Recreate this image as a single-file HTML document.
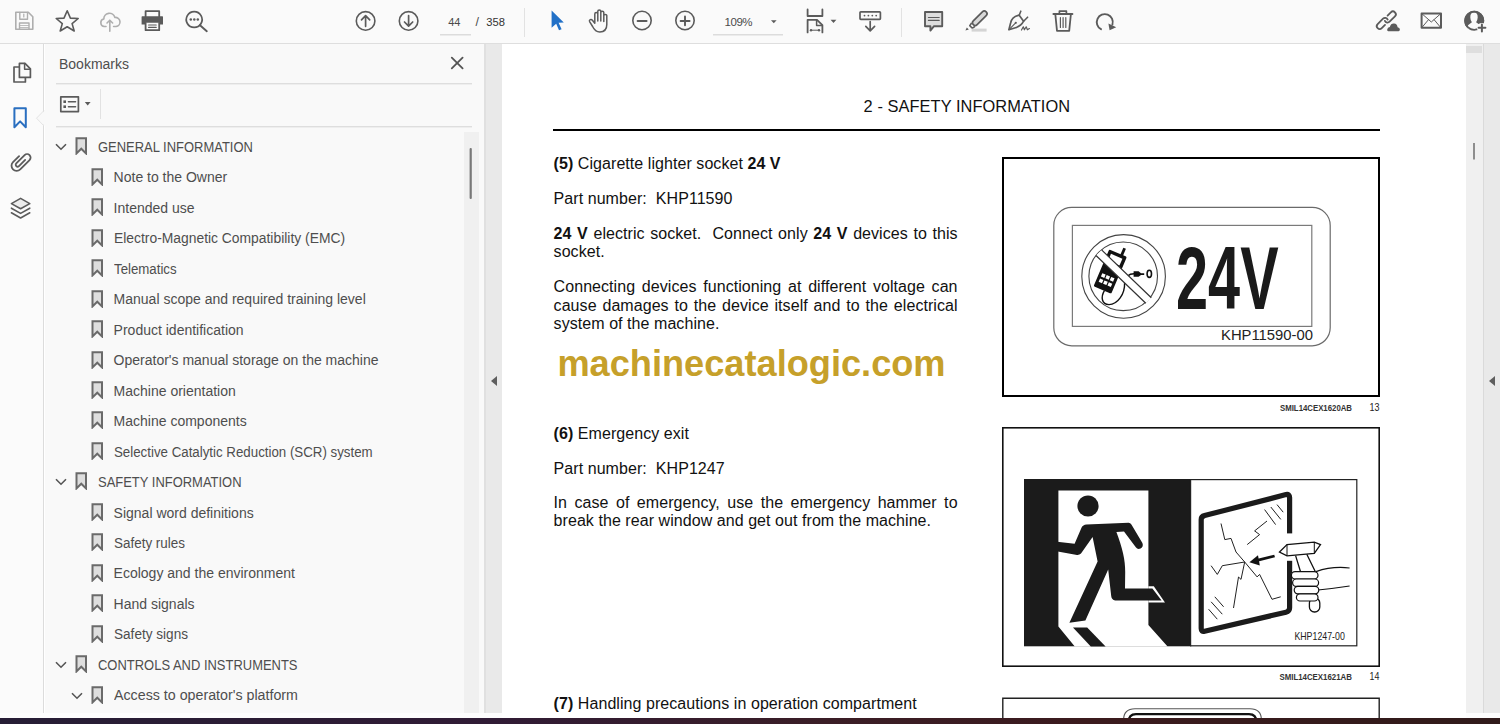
<!DOCTYPE html><html><head><meta charset="utf-8"><style>*{box-sizing:border-box;margin:0;padding:0}
html,body{width:1500px;height:724px;overflow:hidden;background:#fff;font-family:"Liberation Sans",sans-serif}
.a{position:absolute}
#tb{left:0;top:0;width:1500px;height:44px;background:#fafafa;border-bottom:1px solid #dedede}
#rail{left:0;top:44px;width:45px;height:674px;background:#fbfbfb;border-right:1px solid #fff;box-shadow:inset -1px 0 0 #dcdcdc;padding-right:1px}
#panel{left:45px;top:44px;width:439px;height:674px;background:#f9f9f9}
#gut{left:484px;top:44px;width:18px;height:674px;background:#e9e9e9;border-left:2px solid #e0e0e0}
#page{left:502px;top:44px;width:964px;height:674px;background:#fff}
#vs{left:1466px;top:44px;width:17px;height:674px;background:#f0f0f0}
#rgut{left:1483px;top:44px;width:17px;height:674px;background:#e9e9e9;border-left:1px solid #dadada}
#task{left:0;top:718px;width:1500px;height:6px;background:linear-gradient(90deg,#261d35 0%,#301b35 33%,#3a1d26 55%,#3b1a1d 73%,#301a1a 100%)}
.bk{font-size:14px;color:#4e4e4e;line-height:14px;white-space:nowrap}
.bk0{font-size:13px;line-height:13px}
.dt{font-size:16px;color:#111;line-height:16px;white-space:nowrap;letter-spacing:0.06px}
.j{text-align:justify;text-align-last:justify;width:404px}
.wm{font-weight:700;color:#c6a02a;white-space:nowrap}
b{font-weight:700}
.tbt{line-height:1;white-space:nowrap}
</style></head><body><div id="tb" class="a"></div><div id="rail" class="a"></div><div id="panel" class="a"></div>
<div id="gut" class="a"></div><div id="page" class="a"></div><div id="vs" class="a"></div><div id="rgut" class="a"></div>
<svg class="a" style="left:0;top:0" width="1500" height="44" viewBox="0 0 1500 44"><path d="M15.8 12.3H28.3L32.8 16.8V29.3H15.8Z" fill="none" stroke="#aeaeae" stroke-width="1.6" stroke-linejoin="round" stroke-linecap="round" /><path d="M19.8 12.5V19.2H27.5V12.5" fill="none" stroke="#aeaeae" stroke-width="1.4" stroke-linejoin="round" stroke-linecap="round" /><path d="M23.8 14V17" fill="none" stroke="#aeaeae" stroke-width="1.2" stroke-linejoin="round" stroke-linecap="round" /><path d="M19.5 29V23H29V29" fill="none" stroke="#aeaeae" stroke-width="1.4" stroke-linejoin="round" stroke-linecap="round" /><path d="M20 25.5H28.5M20 27.5H28.5" fill="none" stroke="#aeaeae" stroke-width="0.8" stroke-linejoin="round" stroke-linecap="round" /><path d="M67.2 10.8L70.4 18.1L78.2 18.5L72.1 23.6L74.2 31L67.2 26.8L60.2 31L62.3 23.6L56.2 18.5L64 18.1Z" fill="none" stroke="#5b5b5b" stroke-width="1.6" stroke-linejoin="round" stroke-linecap="round" /><path d="M106 26.5H104.3A3.8 3.8 0 0 1 103.8 19A5.6 5.6 0 0 1 114.8 17.4A4.4 4.4 0 0 1 116 26.5H113.6" fill="none" stroke="#aeaeae" stroke-width="1.6" stroke-linejoin="round" stroke-linecap="round" /><path d="M109.8 31.3V20.2M107 23L109.8 20.2L112.6 23" fill="none" stroke="#aeaeae" stroke-width="1.6" stroke-linejoin="round" stroke-linecap="round" /><path d="M145.6 16.5V11.2H159.2V16.5" fill="none" stroke="#5b5b5b" stroke-width="1.8" stroke-linejoin="round" stroke-linecap="round" /><path d="M142.2 16.2H162.4Q163 16.2 163 17V24.4H159.8V22.8H145V24.4H141.6V17Q141.6 16.2 142.2 16.2Z" fill="#5b5b5b"/><path d="M145.6 22.8V30.2H159.2V22.8" fill="none" stroke="#5b5b5b" stroke-width="1.8" stroke-linejoin="round" stroke-linecap="round" /><path d="M148.6 25H156.2M148.6 27.4H156.2" fill="none" stroke="#5b5b5b" stroke-width="1.2" stroke-linejoin="round" stroke-linecap="round" /><path d="M194.2 11.6A7.9 7.9 0 1 1 194.19 11.6Z" fill="none" stroke="#5b5b5b" stroke-width="1.7" stroke-linejoin="round" stroke-linecap="round" /><path d="M200 25.2L206.8 31.2" fill="none" stroke="#5b5b5b" stroke-width="1.9" stroke-linejoin="round" stroke-linecap="round" /><circle cx="190.8" cy="19.5" r="1.25" fill="#5b5b5b"/><circle cx="194.3" cy="19.5" r="1.25" fill="#5b5b5b"/><circle cx="197.8" cy="19.5" r="1.25" fill="#5b5b5b"/><circle cx="365.6" cy="20.9" r="9.3" fill="none" stroke="#5b5b5b" stroke-width="1.6"/><path d="M365.6 26.3V15.8M361.5 19.8L365.6 15.6L369.7 19.8" fill="none" stroke="#5b5b5b" stroke-width="1.7" stroke-linejoin="round" stroke-linecap="round" /><circle cx="408.6" cy="20.9" r="9.3" fill="none" stroke="#5b5b5b" stroke-width="1.6"/><path d="M408.6 15.5V26M404.5 22L408.6 26.2L412.7 22" fill="none" stroke="#5b5b5b" stroke-width="1.7" stroke-linejoin="round" stroke-linecap="round" /><rect x="440" y="34" width="31" height="1.5" fill="#dcdcdc"/><rect x="524" y="8" width="1" height="29" fill="#e2e2e2"/><rect x="901" y="8" width="1" height="29" fill="#e2e2e2"/><rect x="713" y="34" width="70" height="1.5" fill="#dcdcdc"/><path d="M551.6 10.6L563.8 22.6L558.6 22.8L561.6 29.2L559 30.3L556.2 23.8L551.6 27.8Z" fill="#2170c7"/><path d="M592.6 26.5L589.6 21.6Q589 20.3 590.2 19.7Q591.4 19.1 592.4 20.2L594.8 23.2V14Q594.8 12.6 596.3 12.6Q597.8 12.6 597.8 14V21V11.3Q597.8 10 599.3 10Q600.8 10 600.8 11.3V21V12.6Q600.8 11.3 602.3 11.3Q603.8 11.3 603.8 12.6V21.5V15.6Q603.8 14.4 605.3 14.4Q606.8 14.4 606.8 15.6V24.6Q606.8 32 599.8 32Q595.2 32 592.6 26.5Z" fill="none" stroke="#5b5b5b" stroke-width="1.5" stroke-linejoin="round" stroke-linecap="round" /><circle cx="642" cy="20.5" r="9.2" fill="none" stroke="#5b5b5b" stroke-width="1.6"/><path d="M637.6 21H646.6" fill="none" stroke="#5b5b5b" stroke-width="1.9" stroke-linejoin="round" stroke-linecap="round" /><circle cx="685" cy="20.5" r="9.2" fill="none" stroke="#5b5b5b" stroke-width="1.6"/><path d="M680.6 21H689.6M685 16.5V25.3" fill="none" stroke="#5b5b5b" stroke-width="1.9" stroke-linejoin="round" stroke-linecap="round" /><path d="M771 20.2H776.6L773.8 23.2Z" fill="#5b5b5b"/><path d="M807.6 9.4V16H822.4V9.4" fill="none" stroke="#5b5b5b" stroke-width="1.8" stroke-linejoin="round" stroke-linecap="round" /><path d="M807.6 32.4V19.8H817L822.4 25.2V32.4" fill="none" stroke="#5b5b5b" stroke-width="1.8" stroke-linejoin="round" stroke-linecap="round" /><path d="M816.6 20V25.4H822.2" fill="none" stroke="#5b5b5b" stroke-width="1.5" stroke-linejoin="round" stroke-linecap="round" /><path d="M811 30.2H819" fill="none" stroke="#5b5b5b" stroke-width="1.0" stroke-linejoin="round" stroke-linecap="round" /><circle cx="811" cy="30.2" r="1.2" fill="#5b5b5b"/><circle cx="819" cy="30.2" r="1.2" fill="#5b5b5b"/><path d="M830.6 19.8H836.4L833.5 23Z" fill="#5b5b5b"/><path d="M860.8 11.8H879.6Q880.4 11.8 880.4 12.6V18.6Q880.4 19.4 879.6 19.4H860.8Q860 19.4 860 18.6V12.6Q860 11.8 860.8 11.8Z" fill="none" stroke="#5b5b5b" stroke-width="1.7" stroke-linejoin="round" stroke-linecap="round" /><circle cx="864.5" cy="15.6" r="0.9" fill="#5b5b5b"/><circle cx="868.4" cy="15.6" r="0.9" fill="#5b5b5b"/><circle cx="872.3" cy="15.6" r="0.9" fill="#5b5b5b"/><circle cx="876.2" cy="15.6" r="0.9" fill="#5b5b5b"/><path d="M870.2 21.5V30.6M865.8 26.4L870.2 30.8L874.6 26.4" fill="none" stroke="#5b5b5b" stroke-width="1.7" stroke-linejoin="round" stroke-linecap="round" /><path d="M925 12H942.2V26.2H934L930.4 30.6V26.2H925Z" fill="#dddddd" stroke="#5b5b5b" stroke-width="1.9" stroke-linejoin="round" stroke-linecap="round" /><path d="M928.4 17.5H939.2M928.4 20.4H939.2" fill="none" stroke="#5b5b5b" stroke-width="1.1" stroke-linejoin="round" stroke-linecap="round" /><g transform="translate(979.4 18.6) rotate(-45)"><rect x="-8.6" y="-2.7" width="18.2" height="5.4" rx="2.7" fill="#d8d8d8" stroke="#5b5b5b" stroke-width="1.7"/><path d="M-8.6 -2.4L-11.8 -1.8V1.8L-8.6 2.4" fill="none" stroke="#5b5b5b" stroke-width="1.6" stroke-linejoin="round"/></g><path d="M965.4 30.6L966.8 27.4L968.8 29.4Z" fill="#5b5b5b"/><rect x="971.6" y="28.6" width="15" height="3" fill="#d4d4d4"/><path d="M1019.2 15.2C1014.2 16.2 1011.4 19.2 1010.6 23L1008.9 29.7L1015.4 27.8C1019.2 26.6 1022 24.4 1023.6 21.2Z" fill="none" stroke="#5b5b5b" stroke-width="1.7" stroke-linejoin="round" stroke-linecap="round" /><path d="M1020.8 11.2L1019.2 15.2M1027.6 17.2L1023.6 21.2" fill="none" stroke="#5b5b5b" stroke-width="1.6" stroke-linejoin="round" stroke-linecap="round" /><path d="M1009 29.6L1015.4 23.2" fill="none" stroke="#5b5b5b" stroke-width="1.1" stroke-linejoin="round" stroke-linecap="round" /><circle cx="1015.8" cy="22.8" r="1.1" fill="#5b5b5b"/><path d="M1021.5 30L1023.3 26.8L1024.4 29.8L1026.2 26.8L1027.4 29.8L1029.4 28.6" fill="none" stroke="#5b5b5b" stroke-width="1.2" stroke-linejoin="round" stroke-linecap="round" /><path d="M1053.4 14H1072.4" fill="none" stroke="#5b5b5b" stroke-width="1.9" stroke-linejoin="round" stroke-linecap="round" /><path d="M1059.4 13.6V11.2H1066.4V13.6" fill="none" stroke="#5b5b5b" stroke-width="1.7" stroke-linejoin="round" stroke-linecap="round" /><path d="M1055.4 15L1057 30.8H1069.2L1070.8 15" fill="none" stroke="#5b5b5b" stroke-width="1.8" stroke-linejoin="round" stroke-linecap="round" /><path d="M1060.4 17.6V27.4M1063.1 17.6V27.4M1065.8 17.6V27.4" fill="none" stroke="#5b5b5b" stroke-width="1.2" stroke-linejoin="round" stroke-linecap="round" /><path d="M1101 29.2A8 8 0 1 1 1112.4 24.6" fill="none" stroke="#5b5b5b" stroke-width="1.9" stroke-linejoin="round" stroke-linecap="round" /><path d="M1108.4 23.4L1116.2 27.2L1109.6 30.2Z" fill="#5b5b5b"/><g transform="translate(1390.2 17) rotate(-45)"><path d="M-0.8 -2.9H3.8A2.9 2.9 0 0 1 3.8 2.9H-3.8A2.9 2.9 0 0 1 -6.5 -1" fill="none" stroke="#5b5b5b" stroke-width="1.8" stroke-linecap="round"/></g><g transform="translate(1382.4 23.4) rotate(-45)"><path d="M6.5 1A2.9 2.9 0 0 0 3.8 -2.9H-3.8A2.9 2.9 0 0 0 -3.8 2.9H0.8" fill="none" stroke="#5b5b5b" stroke-width="1.8" stroke-linecap="round"/></g><path d="M1387 32.2Q1385.4 32.2 1385.6 29.4Q1386 26.4 1388.8 26Q1390 22 1394 22.2Q1398 22.6 1398.6 26.2Q1401.2 26.6 1401.2 29.4Q1401 32.2 1399.2 32.2Z" fill="#fafafa"/><path d="M1388.2 31.2Q1387 31.2 1387.2 29.4Q1387.5 27.2 1389.8 27Q1390.8 23.4 1394 23.6Q1397.2 23.9 1397.6 27.2Q1399.8 27.4 1399.9 29.4Q1399.8 31.2 1398.6 31.2Z" fill="#5b5b5b"/><path d="M1421.6 13.4H1441V27.8H1421.6Z" fill="none" stroke="#5b5b5b" stroke-width="2.0" stroke-linejoin="round" stroke-linecap="round" /><path d="M1422 13.8L1431.3 22L1440.6 13.8M1422 27.4L1428.4 19.8M1440.6 27.4L1434.2 19.8" fill="none" stroke="#5b5b5b" stroke-width="1.0" stroke-linejoin="round" stroke-linecap="round" /><path d="M1474.2 10.8A10 10 0 1 0 1474.3 10.8Z" fill="#5b5b5b"/><path d="M1474 12.6Q1477.9 12.6 1477.7 17.6Q1477.5 20.6 1476.1 22.3L1479.2 24.6V30.4Q1475 31.4 1471.4 30.6Q1468.4 29.8 1466.6 27.6Q1468.4 24.4 1471.9 22.3Q1470.4 20.6 1470.3 17.6Q1470.1 12.6 1474 12.6Z" fill="#fafafa"/><circle cx="1474.2" cy="20.8" r="9.1" fill="none" stroke="#5b5b5b" stroke-width="1.8"/><circle cx="1481.9" cy="27.8" r="4.9" fill="#fafafa"/><path d="M1478.6 27.8H1485.4M1481.9 24.4V31.4" fill="none" stroke="#5b5b5b" stroke-width="2.0" stroke-linejoin="round" stroke-linecap="round" /></svg>
<svg class="a" style="left:0;top:0" width="50" height="230" viewBox="0 0 50 230"><path d="M19.4 63.4H25L30.4 68.8V77.4H19.4Z" fill="none" stroke="#5b5b5b" stroke-width="1.7" stroke-linejoin="round" stroke-linecap="round"/><path d="M24.6 63.6V69.2H30.2" fill="none" stroke="#5b5b5b" stroke-width="1.5" stroke-linejoin="round" stroke-linecap="round"/><path d="M19 67H14V82H25.4V77.8" fill="none" stroke="#5b5b5b" stroke-width="1.7" stroke-linejoin="round" stroke-linecap="round"/><path d="M14.4 108.2H25.8V127.2L20.1 121.4L14.4 127.2Z" fill="none" stroke="#2a6fc0" stroke-width="2.0" stroke-linejoin="round" stroke-linecap="round"/><path d="M45 110.5L36.5 118.2L45 126Z" fill="#f9f9f9"/><path d="M44 110.5L36.5 118.2L44 126" fill="none" stroke="#e4e4e4" stroke-width="1"/><g transform="translate(21 161.4) rotate(45)"><path d="M1.9 -4V4.8A1.9 1.9 0 0 1 -1.9 4.8V-7A3.5 3.5 0 0 1 5.1 -7V6.2A5.1 5.1 0 0 1 -5.1 6.2V-2.4" fill="none" stroke="#5b5b5b" stroke-width="1.8" stroke-linecap="round"/></g><path d="M11.4 203.6L20.6 198.4L29.8 203.6L20.6 208.8Z" fill="#ececec" stroke="#5b5b5b" stroke-width="1.6" stroke-linejoin="round" stroke-linecap="round"/><path d="M11.4 208.2L20.6 213.4L29.8 208.2" fill="none" stroke="#5b5b5b" stroke-width="1.6" stroke-linejoin="round" stroke-linecap="round"/><path d="M11.4 212.8L20.6 218L29.8 212.8" fill="none" stroke="#5b5b5b" stroke-width="1.6" stroke-linejoin="round" stroke-linecap="round"/></svg>
<svg class="a" style="left:0;top:0" width="500" height="724" viewBox="0 0 500 724"><path d="M451.8 57.6L462.6 68.4M462.6 57.6L451.8 68.4" fill="none" stroke="#555" stroke-width="1.8" stroke-linejoin="round" stroke-linecap="round"/><rect x="56" y="83" width="416" height="1.4" fill="#dedede"/><rect x="56" y="126" width="416" height="1.4" fill="#dedede"/><rect x="100" y="89" width="1" height="30" fill="#e2e2e2"/><path d="M60.8 96.8H78.4V111.6H60.8Z" fill="none" stroke="#5b5b5b" stroke-width="1.7" stroke-linejoin="round" stroke-linecap="round"/><rect x="63.4" y="100.4" width="2.6" height="2.6" fill="#5b5b5b"/><rect x="63.4" y="105.4" width="2.6" height="2.6" fill="#5b5b5b"/><path d="M68.4 101.7H75.6M68.4 106.7H75.6" fill="none" stroke="#5b5b5b" stroke-width="1.4" stroke-linejoin="round" stroke-linecap="round"/><path d="M84.8 102H90.6L87.7 105.4Z" fill="#5b5b5b"/><rect x="464" y="132" width="15" height="586" fill="#f0f0f0"/><rect x="469.6" y="148" width="2.2" height="51" rx="1" fill="#787878"/></svg>
<div class="a bk" style="left:59px;top:57.15px;font-size:14px;line-height:14px;">Bookmarks</div>
<svg class="a" style="left:74.6px;top:136.1px" width="13" height="19" viewBox="0 0 13 19"><path d="M1.5 2.3H11V17.4L6.25 12.7L1.5 17.4Z" fill="#dedede" stroke="#6a6a6a" stroke-width="2" stroke-linejoin="miter"/></svg>
<svg class="a" style="left:54.8px;top:143.1px" width="12" height="8" viewBox="0 0 12 8"><path d="M1 1.2L6 6.2L11 1.2" fill="none" stroke="#555" stroke-width="1.6"/></svg>
<div class="a bk" style="left:97.6px;top:139.53px;font-size:14.5px;line-height:14.5px;transform:scaleX(0.894);transform-origin:0 0">GENERAL INFORMATION</div>
<svg class="a" style="left:90.6px;top:166.6px" width="13" height="19" viewBox="0 0 13 19"><path d="M1.5 2.3H11V17.4L6.25 12.7L1.5 17.4Z" fill="#dedede" stroke="#6a6a6a" stroke-width="2" stroke-linejoin="miter"/></svg>
<div class="a bk" style="left:113.6px;top:170.23px;font-size:14px;line-height:14px;">Note to the Owner</div>
<svg class="a" style="left:90.6px;top:197.1px" width="13" height="19" viewBox="0 0 13 19"><path d="M1.5 2.3H11V17.4L6.25 12.7L1.5 17.4Z" fill="#dedede" stroke="#6a6a6a" stroke-width="2" stroke-linejoin="miter"/></svg>
<div class="a bk" style="left:113.6px;top:200.71px;font-size:14px;line-height:14px;">Intended use</div>
<svg class="a" style="left:90.6px;top:227.5px" width="13" height="19" viewBox="0 0 13 19"><path d="M1.5 2.3H11V17.4L6.25 12.7L1.5 17.4Z" fill="#dedede" stroke="#6a6a6a" stroke-width="2" stroke-linejoin="miter"/></svg>
<div class="a bk" style="left:113.6px;top:231.19px;font-size:14px;line-height:14px;transform:scaleX(0.99);transform-origin:0 0">Electro-Magnetic Compatibility (EMC)</div>
<svg class="a" style="left:90.6px;top:258.0px" width="13" height="19" viewBox="0 0 13 19"><path d="M1.5 2.3H11V17.4L6.25 12.7L1.5 17.4Z" fill="#dedede" stroke="#6a6a6a" stroke-width="2" stroke-linejoin="miter"/></svg>
<div class="a bk" style="left:113.6px;top:261.67px;font-size:14px;line-height:14px;transform:scaleX(0.947);transform-origin:0 0">Telematics</div>
<svg class="a" style="left:90.6px;top:288.5px" width="13" height="19" viewBox="0 0 13 19"><path d="M1.5 2.3H11V17.4L6.25 12.7L1.5 17.4Z" fill="#dedede" stroke="#6a6a6a" stroke-width="2" stroke-linejoin="miter"/></svg>
<div class="a bk" style="left:113.6px;top:292.15px;font-size:14px;line-height:14px;">Manual scope and required training level</div>
<svg class="a" style="left:90.6px;top:319.0px" width="13" height="19" viewBox="0 0 13 19"><path d="M1.5 2.3H11V17.4L6.25 12.7L1.5 17.4Z" fill="#dedede" stroke="#6a6a6a" stroke-width="2" stroke-linejoin="miter"/></svg>
<div class="a bk" style="left:113.6px;top:322.63px;font-size:14px;line-height:14px;">Product identification</div>
<svg class="a" style="left:90.6px;top:349.5px" width="13" height="19" viewBox="0 0 13 19"><path d="M1.5 2.3H11V17.4L6.25 12.7L1.5 17.4Z" fill="#dedede" stroke="#6a6a6a" stroke-width="2" stroke-linejoin="miter"/></svg>
<div class="a bk" style="left:113.6px;top:353.11px;font-size:14px;line-height:14px;">Operator's manual storage on the machine</div>
<svg class="a" style="left:90.6px;top:379.9px" width="13" height="19" viewBox="0 0 13 19"><path d="M1.5 2.3H11V17.4L6.25 12.7L1.5 17.4Z" fill="#dedede" stroke="#6a6a6a" stroke-width="2" stroke-linejoin="miter"/></svg>
<div class="a bk" style="left:113.6px;top:383.59px;font-size:14px;line-height:14px;">Machine orientation</div>
<svg class="a" style="left:90.6px;top:410.4px" width="13" height="19" viewBox="0 0 13 19"><path d="M1.5 2.3H11V17.4L6.25 12.7L1.5 17.4Z" fill="#dedede" stroke="#6a6a6a" stroke-width="2" stroke-linejoin="miter"/></svg>
<div class="a bk" style="left:113.6px;top:414.07px;font-size:14px;line-height:14px;">Machine components</div>
<svg class="a" style="left:90.6px;top:440.9px" width="13" height="19" viewBox="0 0 13 19"><path d="M1.5 2.3H11V17.4L6.25 12.7L1.5 17.4Z" fill="#dedede" stroke="#6a6a6a" stroke-width="2" stroke-linejoin="miter"/></svg>
<div class="a bk" style="left:113.6px;top:444.55px;font-size:14px;line-height:14px;transform:scaleX(0.95);transform-origin:0 0">Selective Catalytic Reduction (SCR) system</div>
<svg class="a" style="left:74.6px;top:471.4px" width="13" height="19" viewBox="0 0 13 19"><path d="M1.5 2.3H11V17.4L6.25 12.7L1.5 17.4Z" fill="#dedede" stroke="#6a6a6a" stroke-width="2" stroke-linejoin="miter"/></svg>
<svg class="a" style="left:54.8px;top:478.4px" width="12" height="8" viewBox="0 0 12 8"><path d="M1 1.2L6 6.2L11 1.2" fill="none" stroke="#555" stroke-width="1.6"/></svg>
<div class="a bk" style="left:97.6px;top:474.81px;font-size:14.5px;line-height:14.5px;transform:scaleX(0.894);transform-origin:0 0">SAFETY INFORMATION</div>
<svg class="a" style="left:90.6px;top:501.9px" width="13" height="19" viewBox="0 0 13 19"><path d="M1.5 2.3H11V17.4L6.25 12.7L1.5 17.4Z" fill="#dedede" stroke="#6a6a6a" stroke-width="2" stroke-linejoin="miter"/></svg>
<div class="a bk" style="left:113.6px;top:505.51px;font-size:14px;line-height:14px;">Signal word definitions</div>
<svg class="a" style="left:90.6px;top:532.3px" width="13" height="19" viewBox="0 0 13 19"><path d="M1.5 2.3H11V17.4L6.25 12.7L1.5 17.4Z" fill="#dedede" stroke="#6a6a6a" stroke-width="2" stroke-linejoin="miter"/></svg>
<div class="a bk" style="left:113.6px;top:535.99px;font-size:14px;line-height:14px;transform:scaleX(0.96);transform-origin:0 0">Safety rules</div>
<svg class="a" style="left:90.6px;top:562.8px" width="13" height="19" viewBox="0 0 13 19"><path d="M1.5 2.3H11V17.4L6.25 12.7L1.5 17.4Z" fill="#dedede" stroke="#6a6a6a" stroke-width="2" stroke-linejoin="miter"/></svg>
<div class="a bk" style="left:113.6px;top:566.47px;font-size:14px;line-height:14px;">Ecology and the environment</div>
<svg class="a" style="left:90.6px;top:593.3px" width="13" height="19" viewBox="0 0 13 19"><path d="M1.5 2.3H11V17.4L6.25 12.7L1.5 17.4Z" fill="#dedede" stroke="#6a6a6a" stroke-width="2" stroke-linejoin="miter"/></svg>
<div class="a bk" style="left:113.6px;top:596.95px;font-size:14px;line-height:14px;">Hand signals</div>
<svg class="a" style="left:90.6px;top:623.8px" width="13" height="19" viewBox="0 0 13 19"><path d="M1.5 2.3H11V17.4L6.25 12.7L1.5 17.4Z" fill="#dedede" stroke="#6a6a6a" stroke-width="2" stroke-linejoin="miter"/></svg>
<div class="a bk" style="left:113.6px;top:627.43px;font-size:14px;line-height:14px;transform:scaleX(0.97);transform-origin:0 0">Safety signs</div>
<svg class="a" style="left:74.6px;top:654.3px" width="13" height="19" viewBox="0 0 13 19"><path d="M1.5 2.3H11V17.4L6.25 12.7L1.5 17.4Z" fill="#dedede" stroke="#6a6a6a" stroke-width="2" stroke-linejoin="miter"/></svg>
<svg class="a" style="left:54.8px;top:661.3px" width="12" height="8" viewBox="0 0 12 8"><path d="M1 1.2L6 6.2L11 1.2" fill="none" stroke="#555" stroke-width="1.6"/></svg>
<div class="a bk" style="left:97.6px;top:657.69px;font-size:14.5px;line-height:14.5px;transform:scaleX(0.894);transform-origin:0 0">CONTROLS AND INSTRUMENTS</div>
<svg class="a" style="left:90.6px;top:684.7px" width="13" height="19" viewBox="0 0 13 19"><path d="M1.5 2.3H11V17.4L6.25 12.7L1.5 17.4Z" fill="#dedede" stroke="#6a6a6a" stroke-width="2" stroke-linejoin="miter"/></svg>
<svg class="a" style="left:70.8px;top:691.7px" width="12" height="8" viewBox="0 0 12 8"><path d="M1 1.2L6 6.2L11 1.2" fill="none" stroke="#555" stroke-width="1.6"/></svg>
<div class="a bk" style="left:113.6px;top:688.39px;font-size:14px;line-height:14px;transform:scaleX(1.017);transform-origin:0 0">Access to operator's platform</div>
<div class="a tbt" style="left:448.2px;top:17.19px;font-size:11px;line-height:11px;color:#4a4a4a">44</div>
<div class="a tbt" style="left:475.6px;top:16.22px;font-size:12.5px;line-height:12.5px;color:#4a4a4a">/</div>
<div class="a tbt" style="left:486.2px;top:16.92px;font-size:11.2px;line-height:11.2px;color:#333">358</div>
<div class="a tbt" style="left:724.6px;top:16.57px;font-size:11.5px;line-height:11.5px;color:#4a4a4a;letter-spacing:-0.5px">109%</div>
<svg class="a" style="left:0;top:0" width="1500" height="724" viewBox="0 0 1500 724"><path d="M497 376V386L491 381Z" fill="#5e5e5e"/><path d="M1495 376V386L1489 381Z" fill="#5e5e5e"/><rect x="1466" y="46" width="16" height="7" fill="#dedede"/><rect x="1473.2" y="143" width="1.6" height="16.5" fill="#777"/></svg>
<svg class="a" style="left:0;top:0" width="1500" height="724" viewBox="0 0 1500 724"><rect x="1003" y="158" width="376" height="238" fill="none" stroke="#000" stroke-width="2"/><rect x="1053.8" y="207.4" width="276.4" height="138.4" rx="18" fill="none" stroke="#6a6a6a" stroke-width="1.2"/><rect x="1072.4" y="225.4" width="239.4" height="101" fill="none" stroke="#7a7a7a" stroke-width="1.2"/><circle cx="1123.6" cy="276.4" r="41.8" fill="none" stroke="#444" stroke-width="1.1"/><circle cx="1123.2" cy="276.3" r="34.3" fill="none" stroke="#444" stroke-width="1.1"/><g transform="translate(1110.6 270.6) rotate(23)"><rect x="-9.6" y="-19" width="19.2" height="40" rx="1.4" fill="#111"/><rect x="-6.2" y="-15.6" width="12.4" height="7.4" fill="#fff"/><rect x="2.8" y="-26" width="2.8" height="8" fill="#111"/><rect x="-6.6" y="5.6" width="3.6" height="3.6" fill="#fff"/><rect x="-1.8" y="5.6" width="3.6" height="3.6" fill="#fff"/><rect x="3" y="5.6" width="3.6" height="3.6" fill="#fff"/><rect x="-6.6" y="11.4" width="3.6" height="3.6" fill="#fff"/><rect x="-1.8" y="11.4" width="3.6" height="3.6" fill="#fff"/><rect x="3" y="11.4" width="3.6" height="3.6" fill="#fff"/></g><path d="M1104.4 290.6C1100.6 297 1101.6 304.6 1109 304.6C1117.6 304.6 1125 294 1124.6 283C1125.6 276 1130 273.8 1134 273.8" fill="none" stroke="#111" stroke-width="1.4"/><path d="M1133.6 271.2L1138.6 271.2L1141 273.2L1144.2 273.2V275L1141 275L1138.6 276.8L1133.6 276.8Z" fill="#111"/><ellipse cx="1149.3" cy="273.8" rx="2.2" ry="3.6" fill="none" stroke="#111" stroke-width="1.6"/><path d="M1101.6 249.9L1151.3 297.8L1145.8 303.3L1096 255.5Z" fill="#fff"/><path d="M1101.6 249.9L1151.3 297.8M1096 255.5L1145.8 303.3" stroke="#333" stroke-width="1.2"/><text x="1176" y="308.6" font-family="Liberation Sans" font-weight="700" font-size="88.6" textLength="102.6" lengthAdjust="spacingAndGlyphs" fill="#1a1a1a">24V</text><text x="1221" y="340.4" font-family="Liberation Sans" font-size="15" textLength="92" lengthAdjust="spacingAndGlyphs" fill="#222">KHP11590-00</text><text x="1280" y="411.2" font-family="Liberation Sans" font-weight="700" font-size="8.2" textLength="72" lengthAdjust="spacingAndGlyphs" fill="#333">SMIL14CEX1620AB</text><text x="1369.4" y="411.2" font-family="Liberation Sans" font-size="10.5" textLength="10" lengthAdjust="spacingAndGlyphs" fill="#222">13</text><rect x="1002.8" y="427.8" width="376.4" height="238.4" fill="none" stroke="#111" stroke-width="1.6"/><rect x="1024" y="479" width="167.3" height="167.3" fill="#1b1b1b"/><path d="M1058.4 490.4H1148.4V625L1167.6 646.4H1074.8L1058.4 626.6Z" fill="#fff"/><path d="M1073 627.6H1087.2L1105.6 646.4H1090.8Z" fill="#1b1b1b"/><path d="M1148.4 586.2H1153.8L1165 602.6H1148.4Z" fill="#fff"/><circle cx="1088" cy="506" r="10.6" fill="#1b1b1b"/><path d="M1086.4 524.4L1128.6 522.8Q1130.4 522.8 1131.4 524.4L1142.4 543Q1143.8 546.6 1140.6 548.4Q1137.6 549.8 1135.8 547.2L1124 531.4L1116.4 532C1122.4 548 1125.4 560 1125.2 572L1125 588.6H1152.4L1161.6 600.4H1115.2Q1111.6 600 1111.2 596L1108.2 569.6L1085.4 620.6L1069.4 622.8L1097.6 561.4L1092.6 537L1081 553.6Q1079.4 555.2 1077 555L1055 551V541.6L1074.6 543.8L1081.6 527.6Q1083 524.6 1086.4 524.4Z" fill="#1b1b1b"/><rect x="1190.6" y="479.6" width="166.2" height="166.2" fill="#fff" stroke="#222" stroke-width="1.2"/><path d="M1204.6 515.6L1286 494.6Q1289.6 493.8 1289.6 497.6V607.8Q1289.6 611.4 1286 612.2L1204.6 631.2Q1201.2 632 1201.2 628.4V519.4Q1201.2 516.4 1204.6 515.6Z" fill="none" stroke="#1b1b1b" stroke-width="5.2"/><rect x="1284" y="533.4" width="9" height="27.4" fill="#fff"/><path d="M1244.7 562L1236 552L1231 538.4L1224.8 539.6L1221 523.5M1247.2 544.6L1259.6 534.6L1254.6 530.9L1267 521M1244.7 562L1222.3 565.7L1217.3 574.4L1211.1 565.7M1244.7 562L1241 579.4L1238.5 577L1233.5 608M1244.7 562L1257.1 576.9L1259.6 574.4L1272 599.3L1280.7 596.8M1264.6 509.6L1275.6 524.6M1270.8 507L1280.8 519.4M1277 504.6L1283.2 512.2M1208.6 609.2L1217.3 619.2M1211.1 601.8L1222.3 614.2M1214.8 596.8L1223.6 606.8" fill="none" stroke="#222" stroke-width="1"/><path d="M1274.6 556L1256 560.6" stroke="#111" stroke-width="2.8"/><path d="M1249.4 562.2L1258 555.2L1259.8 565.4Z" fill="#111"/><path d="M1279.5 552L1287 544.6L1314.3 542.1L1320.5 544.6L1314.3 553.3L1287 555.8Z" fill="#fff" stroke="#111" stroke-width="1.3"/><path d="M1287 544.6V555.8M1314.3 542.1V553.3" stroke="#111" stroke-width="1"/><path d="M1295.6 555.6L1300.6 572M1306.8 554.2L1315.5 572" stroke="#111" stroke-width="1.3"/><path d="M1316 571.6Q1332 566 1349.6 568M1318 590Q1334 588.4 1349.6 586" fill="none" stroke="#111" stroke-width="1.2"/><rect x="1309.4" y="598" width="10.4" height="14" rx="5" fill="#fff" stroke="#111" stroke-width="1.3"/><rect x="1291.4" y="571.6" width="26.6" height="7.4" rx="3.7" fill="#fff" stroke="#111" stroke-width="1.2"/><rect x="1292.6" y="579" width="26" height="7.4" rx="3.7" fill="#fff" stroke="#111" stroke-width="1.2"/><rect x="1294.2" y="586.4" width="24.6" height="7.4" rx="3.7" fill="#fff" stroke="#111" stroke-width="1.2"/><rect x="1296.4" y="593.8" width="21.6" height="7.2" rx="3.6" fill="#fff" stroke="#111" stroke-width="1.2"/><text x="1294.4" y="639.8" font-family="Liberation Sans" font-size="11.4" textLength="50.4" lengthAdjust="spacingAndGlyphs" fill="#222">KHP1247-00</text><text x="1279.4" y="680.4" font-family="Liberation Sans" font-weight="700" font-size="8.2" textLength="72.6" lengthAdjust="spacingAndGlyphs" fill="#333">SMIL14CEX1621AB</text><text x="1369.6" y="680" font-family="Liberation Sans" font-size="10.5" textLength="9.8" lengthAdjust="spacingAndGlyphs" fill="#222">14</text><path d="M1002.8 722V698.2H1379.2V722" fill="none" stroke="#222" stroke-width="1.4"/><path d="M1123.6 722V720Q1123.6 708.8 1135 708.8H1250Q1261.4 708.8 1261.4 720V722" fill="none" stroke="#555" stroke-width="1.1"/><path d="M1128.6 722Q1128.6 714.2 1136 714.2H1249Q1256.4 714.2 1256.4 722" fill="none" stroke="#111" stroke-width="2.2"/></svg>
<div class="a dt" style="left:863.6px;top:97.92px;font-size:16.4px;line-height:16.4px;">2 - SAFETY INFORMATION</div>
<div class="a" style="left:553px;top:129px;width:827px;height:2px;background:#000"></div>
<div class="a dt" style="left:553.6px;top:156.36px;font-size:16px;line-height:16px;"><b>(5)</b> Cigarette lighter socket <b>24 V</b></div>
<div class="a dt" style="left:553.6px;top:190.86px;font-size:16px;line-height:16px;">Part number:&nbsp; KHP11590</div>
<div class="a dt j" style="left:553.6px;top:225.66px;font-size:16px;line-height:16px;"><b>24 V</b> electric socket.&nbsp; Connect only <b>24 V</b> devices to this</div>
<div class="a dt" style="left:553.6px;top:243.86px;font-size:16px;line-height:16px;">socket.</div>
<div class="a dt j" style="left:553.6px;top:279.46px;font-size:16px;line-height:16px;">Connecting devices functioning at different voltage can</div>
<div class="a dt j" style="left:553.6px;top:297.66px;font-size:16px;line-height:16px;">cause damages to the device itself and to the electrical</div>
<div class="a dt" style="left:553.6px;top:315.86px;font-size:16px;line-height:16px;">system of the machine.</div>
<div class="a wm" style="left:557.4px;top:346.16px;font-size:36.2px;line-height:36.2px;">machinecatalogic.com</div>
<div class="a dt" style="left:553.6px;top:426.16px;font-size:16px;line-height:16px;"><b>(6)</b> Emergency exit</div>
<div class="a dt" style="left:553.6px;top:461.26px;font-size:16px;line-height:16px;">Part number:&nbsp; KHP1247</div>
<div class="a dt j" style="left:553.6px;top:495.26px;font-size:16px;line-height:16px;">In case of emergency, use the emergency hammer to</div>
<div class="a dt" style="left:553.6px;top:513.46px;font-size:16px;line-height:16px;">break the rear window and get out from the machine.</div>
<div class="a dt" style="left:553.6px;top:696.46px;font-size:16px;line-height:16px;"><b>(7)</b> Handling precautions in operation compartment</div>
<div class="a" style="left:0;top:713px;width:502px;height:5px;background:#fdfdfd"></div><div class="a" style="left:1466px;top:713px;width:34px;height:5px;background:#fdfdfd"></div>
<div id="task" class="a"></div></body></html>
